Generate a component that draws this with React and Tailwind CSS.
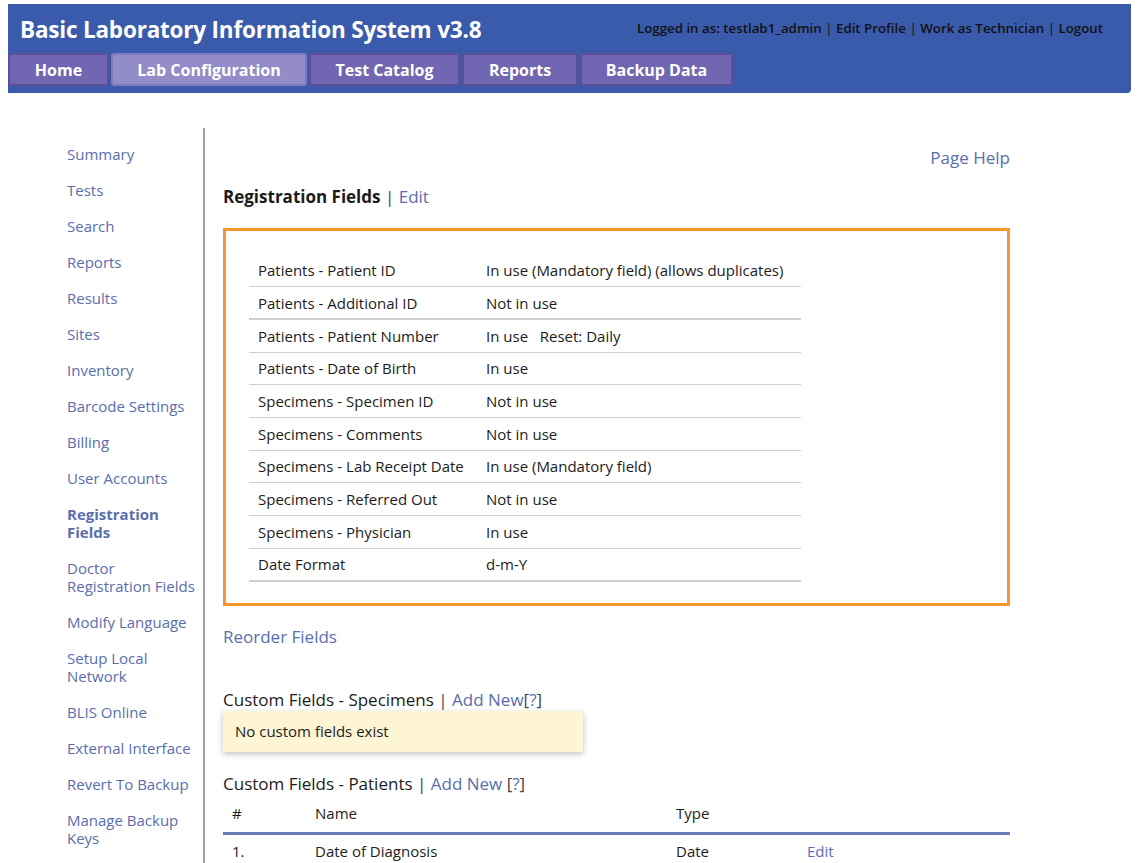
import React from "react";

const F = { fontFamily: '"Open Sans", "DejaVu Sans", sans-serif' };

const tabs = [
  { label: "Home", w: "w-[101px]" },
  { label: "Lab Configuration", w: "w-[196px]", active: true },
  { label: "Test Catalog", w: "w-[151px]" },
  { label: "Reports", w: "w-[116px]" },
  { label: "Backup Data", w: "w-[153px]" },
];

const side = [
  ["Summary"],
  ["Tests"],
  ["Search"],
  ["Reports"],
  ["Results"],
  ["Sites"],
  ["Inventory"],
  ["Barcode Settings"],
  ["Billing"],
  ["User Accounts"],
  ["Registration", "Fields"],
  ["Doctor", "Registration Fields"],
  ["Modify Language"],
  ["Setup Local", "Network"],
  ["BLIS Online"],
  ["External Interface"],
  ["Revert To Backup"],
  ["Manage Backup", "Keys"],
];

const rows = [
  ["Patients - Patient ID", "In use (Mandatory field) (allows duplicates)"],
  ["Patients - Additional ID", "Not in use", true],
  ["Patients - Patient Number", "In use \u00a0\u00a0Reset: Daily"],
  ["Patients - Date of Birth", "In use"],
  ["Specimens - Specimen ID", "Not in use"],
  ["Specimens - Comments", "Not in use"],
  ["Specimens - Lab Receipt Date", "In use (Mandatory field)"],
  ["Specimens - Referred Out", "Not in use"],
  ["Specimens - Physician", "In use"],
  ["Date Format", "d-m-Y", true],
];

export default function App() {
  return (
    <div className="min-h-[863px] bg-white text-[#1c1c1c]" style={F}>
      <div className="mx-2 mt-1 h-[89px] rounded-br-[4px] bg-[#3a5bab] flex flex-col">
        <div className="flex items-center justify-between h-[49px] pl-3 pr-[28px]">
          <div className="text-white font-bold text-[22.5px] tracking-[-0.2px] pt-[2px]">
            Basic Laboratory Information System v3.8
          </div>
          <div className="text-[13.3px] font-semibold text-[#111] pt-[1px]">
            Logged in as: testlab1_admin <span className="font-normal">|</span> Edit Profile{" "}
            <span className="font-normal">|</span> Work as Technician{" "}
            <span className="font-normal">|</span> Logout
          </div>
        </div>
        <div className="flex gap-[2px]">
          {tabs.map((t) => (
            <div
              key={t.label}
              className={`${t.w} h-[33px] flex items-center justify-center rounded-[3px] border-2 text-white font-bold text-[16px] ${
                t.active ? "bg-[#948cc8] border-[#8079c0]" : "bg-[#7166b1] border-[#5b4f98]"
              }`}
            >
              {t.label}
            </div>
          ))}
        </div>
      </div>

      <div className="flex mt-[35px]">
        <div className="w-[205px] border-r-2 border-[#a0a0a0] pl-[67px] pt-[17px] pr-1 flex flex-col gap-[18px] text-[15px] leading-[18px] text-[#5a6ead] min-h-[735px]">
          {side.map((s, i) => (
            <div key={i} className={s[0] === "Registration" ? "font-bold" : ""}>
              {s.map((l, j) => (
                <div key={j} className="whitespace-nowrap">{l}</div>
              ))}
            </div>
          ))}
        </div>

        <div className="w-[805px] pl-[18px] flex flex-col">
          <div className="flex justify-end pt-[19px] text-[17px] leading-[22px] text-[#5a6ead]">Page Help</div>
          <div className="mt-[17px] text-[17px] leading-[22px]">
            <span className="font-bold">Registration Fields</span>{" "}
            <span className="text-[#444]">|</span> <span className="text-[#5a6ead]">Edit</span>
          </div>
          <div className="mt-[20px] border-[3px] border-[#f7962f] pl-[23px] pt-[23px] pb-[21px]">
            <table className="w-[552px] text-[15px] border-collapse">
              <tbody>
                {rows.map((r, i) => (
                  <tr
                    key={i}
                    className={`${r[2] ? "border-b-2" : "border-b"} border-[#cfcfcf]`}
                  >
                    <td className="w-[237px] pl-[9px] h-[32.7px] align-middle whitespace-nowrap">{r[0]}</td>
                    <td className="align-middle whitespace-nowrap">{r[1]}</td>
                  </tr>
                ))}
              </tbody>
            </table>
          </div>

          <div className="mt-[20px] text-[17px] leading-[22px] text-[#5a6ead]">Reorder Fields</div>

          <div className="mt-[41px] text-[17px] leading-[22px]">
            Custom Fields - Specimens <span className="text-[#444]">|</span>{" "}
            <span className="text-[#5a6ead]">Add New</span>
            <span className="text-[#444]">[</span>
            <span className="text-[#5a6ead]">?</span>
            <span className="text-[#444]">]</span>
          </div>
          <div className="w-[360px] h-[41px] bg-[#fdf5d3] shadow-[0_2px_6px_rgba(0,0,0,0.25)] flex items-center pl-3 text-[15px]">
            No custom fields exist
          </div>

          <div className="mt-[21px] text-[17px] leading-[22px]">
            Custom Fields - Patients <span className="text-[#444]">|</span>{" "}
            <span className="text-[#5a6ead]">Add New</span>{" "}
            <span className="text-[#444]">[</span>
            <span className="text-[#5a6ead]">?</span>
            <span className="text-[#444]">]</span>
          </div>
          <table className="w-[787px] text-[15px] border-collapse">
            <thead>
              <tr className="border-b-[3px] border-[#6a7bb6]">
                <td className="w-[92px] pl-[9px] h-[39px] align-middle">#</td>
                <td className="w-[361px] align-middle">Name</td>
                <td className="w-[131px] align-middle">Type</td>
                <td></td>
              </tr>
            </thead>
            <tbody>
              <tr>
                <td className="pl-[9px] h-[34px] align-middle">1.</td>
                <td className="align-middle">Date of Diagnosis</td>
                <td className="align-middle">Date</td>
                <td className="align-middle text-[#5a6ead]">Edit</td>
              </tr>
            </tbody>
          </table>
        </div>
      </div>
    </div>
  );
}
